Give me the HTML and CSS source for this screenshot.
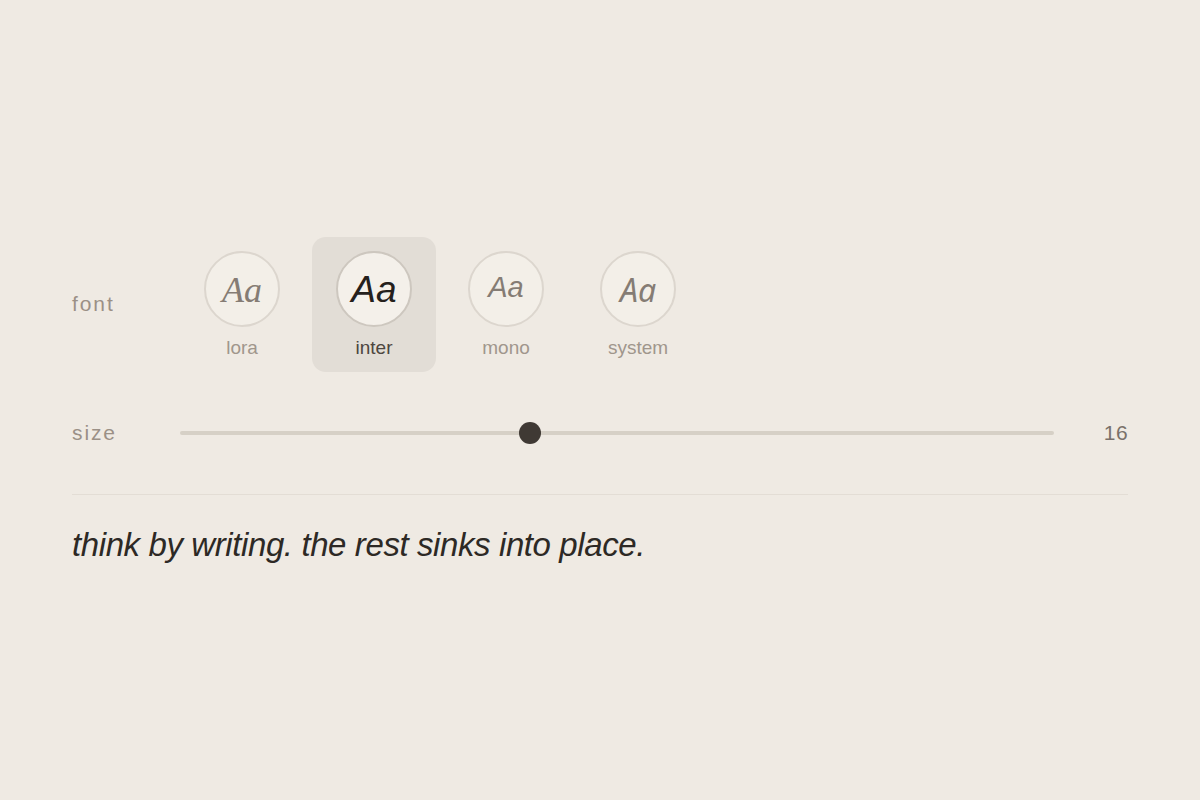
FILE: index.html
```html
<!DOCTYPE html>
<html>
<head>
<meta charset="utf-8">
<link rel="stylesheet" href="styles.css">
</head>
<body>
<main class="panel">
  <div class="row font-row">
    <div class="label">font</div>
    <div class="options">
      <div class="opt">
        <div class="circle"><span class="aa aa-lora">Aa</span></div>
        <div class="opt-name">lora</div>
      </div>
      <div class="opt selected">
        <div class="circle"><span class="aa aa-inter">Aa</span></div>
        <div class="opt-name">inter</div>
      </div>
      <div class="opt">
        <div class="circle"><span class="aa aa-mono">Aa</span></div>
        <div class="opt-name">mono</div>
      </div>
      <div class="opt">
        <div class="circle"><span class="aa aa-system">Aa</span></div>
        <div class="opt-name">system</div>
      </div>
    </div>
  </div>
  <div class="row size-row">
    <div class="label">size</div>
    <div class="slider">
      <div class="track"></div>
      <div class="thumb" style="left: 40%"></div>
    </div>
    <div class="value">16</div>
  </div>
  <div class="divider"></div>
  <p class="sample">think by writing. the rest sinks into place.</p>
</main>
</body>
</html>
```
FILE: styles.css
```css
html, body {
  margin: 0;
  padding: 0;
  background: #efeae3;
  font-family: "Liberation Sans", Arial, sans-serif;
}
.panel {
  padding: 237px 72px 0 72px;
}
.row {
  display: flex;
  align-items: center;
}
.label {
  width: 108px;
  flex: none;
  font-size: 21px;
  letter-spacing: 1.9px;
  color: #9b9086;
}
.font-row .label {
  margin-top: -2px;
}
.options {
  display: flex;
  gap: 8px;
}
.opt {
  width: 124px;
  height: 135px;
  box-sizing: border-box;
  padding-top: 14px;
  border-radius: 14px;
  display: flex;
  flex-direction: column;
  align-items: center;
}
.opt.selected {
  background: #e2ddd6;
}
.circle {
  width: 76px;
  height: 76px;
  box-sizing: border-box;
  border-radius: 50%;
  border: 2px solid #dcd6ce;
  background: #f3efe8;
  display: flex;
  align-items: center;
  justify-content: center;
}
.selected .circle {
  border-color: #cdc7bf;
  background: #f4f0ea;
}
.aa {
  font-style: italic;
  color: #857c74;
  line-height: 1;
}
.aa-lora {
  font-family: "Liberation Serif", "Times New Roman", serif;
  font-size: 36px;
  margin-top: 2px;
}
.aa-inter {
  font-family: "Liberation Sans", Arial, sans-serif;
  font-size: 37px;
  color: #25201c;
  margin-top: 0;
}
.aa-mono {
  font-family: "Liberation Sans", Arial, sans-serif;
  font-size: 29px;
  margin-top: -4px;
}
.aa-system {
  font-family: "Noto Sans", "Open Sans", sans-serif;
  font-size: 32px;
  margin-top: 2px;
}
.opt-name {
  margin-top: 10px;
  font-size: 19px;
  color: #a0968c;
}
.selected .opt-name {
  color: #4d4640;
}
.size-row {
  margin-top: 39px;
  height: 44px;
}
.slider {
  position: relative;
  flex: 1;
  height: 22px;
  display: flex;
  align-items: center;
}
.track {
  width: 100%;
  height: 4px;
  border-radius: 2px;
  background: #d6d0c6;
}
.thumb {
  position: absolute;
  top: 0;
  width: 22px;
  height: 22px;
  margin-left: -11px;
  border-radius: 50%;
  background: #3f3934;
}
.value {
  width: 74px;
  flex: none;
  text-align: right;
  font-size: 21px;
  letter-spacing: 0.4px;
  color: #7a716a;
}
.divider {
  margin-top: 39px;
  height: 1px;
  background: #e3ddd5;
}
.sample {
  margin: 30px 0 0 0;
  font-style: italic;
  font-size: 33px;
  line-height: 40px;
  letter-spacing: -0.4px;
  color: #2d2925;
}
```
